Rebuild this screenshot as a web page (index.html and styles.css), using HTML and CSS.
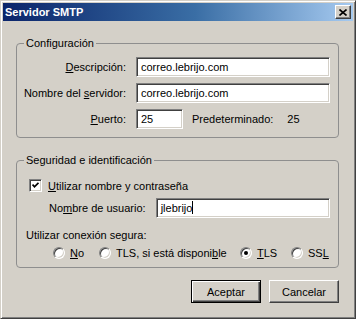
FILE: index.html
```html
<!DOCTYPE html>
<html lang="es">
<head>
    <meta charset="UTF-8">
    <title>Servidor SMTP</title>
    <link rel="stylesheet" href="styles.css">
</head>
<body>
    <div class="window">
        <div class="titlebar">
            <span class="title">Servidor SMTP</span>
            <button type="button" class="close-btn">
                <svg width="8" height="7" viewBox="0 0 8 7"><path d="M0.5 0.5L7.5 6.5M7.5 0.5L0.5 6.5" stroke="#000" stroke-width="1.6" fill="none"/></svg>
            </button>
        </div>

        <div class="content">
            <fieldset class="group">
                <legend>Configuración</legend>
                <div class="field-grid">
                    <label><u>D</u>escripción:</label>
                    <div class="textbox">correo.lebrijo.com</div>

                    <label>Nombre del <u>s</u>ervidor:</label>
                    <div class="textbox">correo.lebrijo.com</div>

                    <label><u>P</u>uerto:</label>
                    <div class="port-row">
                        <div class="textbox port">25</div>
                        <span class="default-label">Predeterminado:</span>
                        <span class="default-value">25</span>
                    </div>
                </div>
            </fieldset>

            <fieldset class="group security">
                <legend>Seguridad e identificación</legend>
                <div class="check-row">
                    <span class="checkbox">
                        <svg width="7" height="7" viewBox="0 0 7 7"><path d="M0.5 2.5L2.5 4.8L6.5 0.8" stroke="#000" stroke-width="1.8" fill="none"/></svg>
                    </span>
                    <span class="check-label"><u>U</u>tilizar nombre y contraseña</span>
                </div>

                <div class="user-row">
                    <label>No<u>m</u>bre de usuario:</label>
                    <div class="textbox">jlebrijo<span class="caret"></span></div>
                </div>

                <div class="secure-label">Utilizar conexión segura:</div>

                <div class="radio-row">
                    <span class="radio-item"><span class="radio"></span><u>N</u>o</span>
                    <span class="radio-item"><span class="radio"></span>TLS, si está disponi<u>b</u>le</span>
                    <span class="radio-item"><span class="radio checked"></span><u>T</u>LS</span>
                    <span class="radio-item"><span class="radio"></span>SS<u>L</u></span>
                </div>
            </fieldset>

            <div class="buttons">
                <button type="button" class="btn default">Aceptar</button>
                <button type="button" class="btn">Cancelar</button>
            </div>
        </div>
    </div>
</body>
</html>
```

FILE: styles.css
```css
body {
    margin: 0;
    padding: 0;
    font-family: Tahoma, "Liberation Sans", Arial, sans-serif;
    font-size: 11px;
    color: #000;
    background-color: #d4d0c8;
}

.window {
    width: 356px;
    height: 319px;
    box-sizing: border-box;
    border: 1px solid;
    border-color: #d4d0c8 #404040 #404040 #d4d0c8;
    box-shadow: inset 1px 1px #fff, inset -1px -1px #808080;
    padding: 2px;
    background: #d4d0c8;
}

.titlebar {
    height: 18px;
    display: flex;
    align-items: center;
    justify-content: space-between;
    padding: 0 2px 0 2px;
    background: linear-gradient(to right, #0a246a, #3a6ea5 55%, #a6caf0);
}

.title {
    color: white;
    font-weight: bold;
    line-height: 13px;
}

.close-btn {
    width: 16px;
    height: 14px;
    padding: 0;
    display: flex;
    align-items: center;
    justify-content: center;
    background: #d4d0c8;
    border: 1px solid;
    border-color: #fff #404040 #404040 #fff;
    box-shadow: inset -1px -1px #808080;
}

.content {
    padding: 16px 14px 0 13px;
}

.group {
    margin: 0;
    min-width: 0;
    border: 1px solid #8e8e8e;
    border-radius: 4px;
    padding: 7px 8px 8px 9px;
}

.group legend {
    padding: 0 2px;
    margin-left: -2px;
    line-height: 13px;
}

.field-grid {
    display: grid;
    grid-template-columns: 100px 1fr;
    column-gap: 10px;
    row-gap: 6px;
    align-items: center;
}

.field-grid label {
    justify-self: end;
    white-space: nowrap;
    line-height: 13px;
}

.textbox {
    height: 20px;
    box-sizing: border-box;
    border: 1px solid;
    border-color: #808080 #fff #fff #808080;
    box-shadow: inset 1px 1px #404040, inset -1px -1px #d4d0c8;
    background: white;
    padding: 0 4px;
    line-height: 18px;
    white-space: nowrap;
}

.port-row {
    display: flex;
    align-items: center;
}

.textbox.port {
    width: 47px;
}

.default-label {
    margin-left: 9px;
}

.default-value {
    margin-left: 14px;
}

.security {
    margin-top: 16px;
    padding-top: 12px;
    padding-bottom: 8px;
}

.check-row {
    display: flex;
    align-items: center;
    padding-left: 3px;
    height: 13px;
}

.checkbox {
    width: 13px;
    height: 13px;
    box-sizing: border-box;
    border: 1px solid;
    border-color: #808080 #fff #fff #808080;
    box-shadow: inset 1px 1px #404040, inset -1px -1px #d4d0c8;
    background: white;
    display: flex;
    align-items: center;
    justify-content: center;
}

.check-label {
    margin-left: 6px;
}

.user-row {
    display: flex;
    align-items: center;
    margin-top: 6px;
    padding-left: 23px;
}

.user-row label {
    margin-right: 10px;
    white-space: nowrap;
}

.user-row .textbox {
    flex: 1;
}

.caret {
    display: inline-block;
    width: 1px;
    height: 13px;
    background: #000;
    vertical-align: -2px;
}

.secure-label {
    margin-top: 11px;
    line-height: 13px;
}

.radio-row {
    display: grid;
    grid-template-columns: 46px 141px 51px auto;
    align-items: center;
    margin-top: 5px;
    padding-left: 27px;
    height: 12px;
}

.radio-item {
    display: flex;
    align-items: center;
    white-space: nowrap;
}

.radio {
    width: 12px;
    height: 12px;
    box-sizing: border-box;
    margin-right: 5px;
    border-radius: 50%;
    border: 1px solid;
    border-color: #808080 #fff #fff #808080;
    box-shadow: inset 1px 1px #404040, inset -1px -1px #d4d0c8;
    background: white;
    display: flex;
    align-items: center;
    justify-content: center;
}

.radio.checked::after {
    content: "";
    width: 4px;
    height: 4px;
    border-radius: 50%;
    background: #000;
}

.buttons {
    display: flex;
    justify-content: flex-end;
    gap: 8px;
    margin-top: 12px;
}

.btn {
    width: 70px;
    height: 23px;
    padding: 0;
    font-family: inherit;
    font-size: 11px;
    color: #000;
    background: #d4d0c8;
    border: 1px solid;
    border-color: #fff #404040 #404040 #fff;
    box-shadow: inset -1px -1px #808080;
}

.btn.default {
    border-color: #000;
    box-shadow: inset 1px 1px #fff, inset -1px -1px #404040, inset -2px -2px #808080;
}
```
